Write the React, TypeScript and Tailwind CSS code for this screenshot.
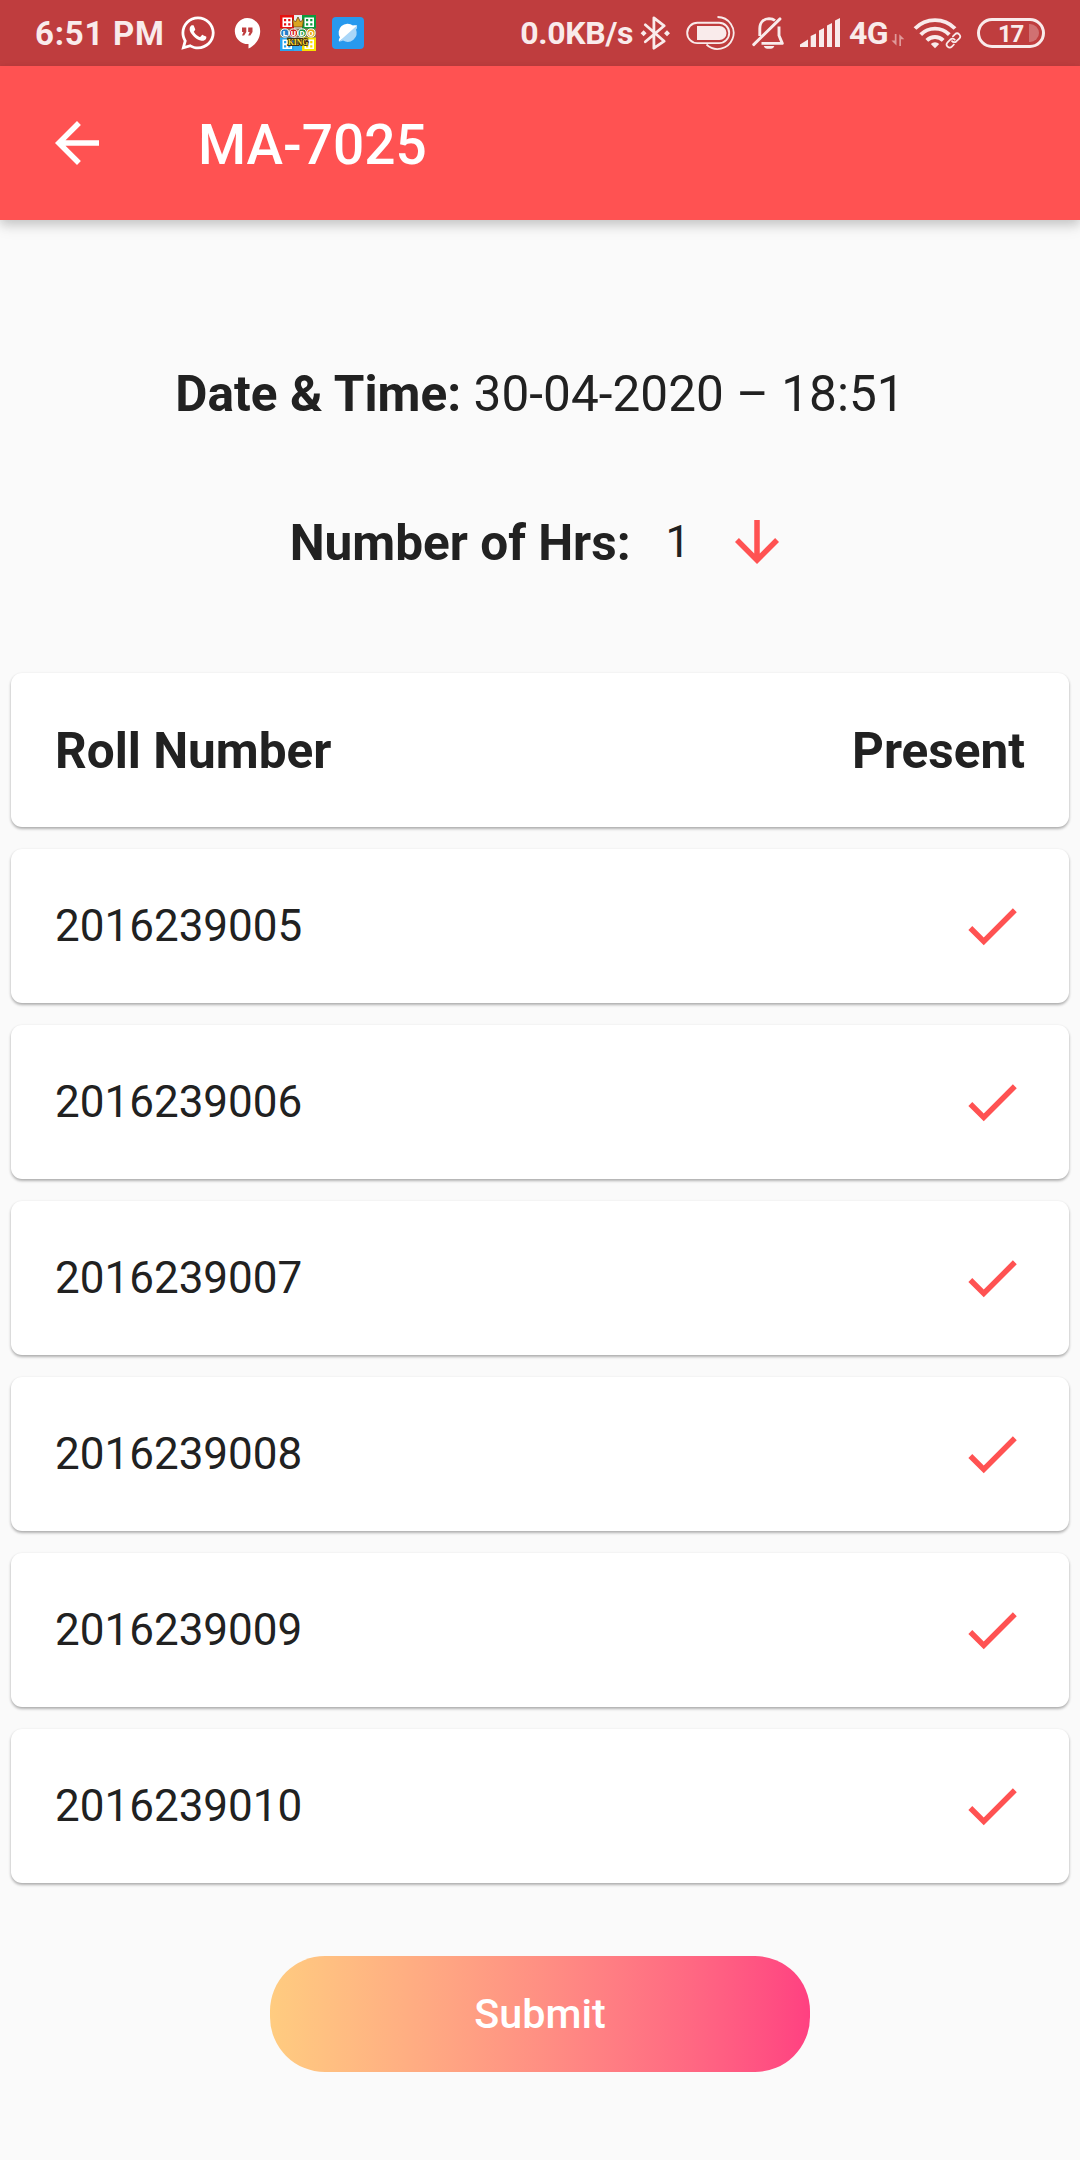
import { FaWhatsapp } from "react-icons/fa";
import { MdArrowBack, MdArrowDownward, MdCheck } from "react-icons/md";

const rollNumbers = [
  "2016239005",
  "2016239006",
  "2016239007",
  "2016239008",
  "2016239009",
  "2016239010",
];

function Hangouts() {
  return (
    <svg className="ml-[17px] h-[31px] w-[27px] shrink-0" viewBox="0 0 27 31">
      <path d="M13.2 0A13 13 0 0 1 26.2 13C26.2 21 21 27.500 14.500 30.500V26A13 13 0 1 1 13.200 0Z" fill="#fff" />
      <path d="M8 9.500h4.300v4.500l-2.200 3.600H8l1.500-3.600H8ZM14.200 9.500h4.300v4.500l-2.200 3.600h-2.100l1.500-3.600h-1.500Z" fill="#bf3d3e" />
    </svg>
  );
}

function LudoYard({ x, y, color }: { x: number; y: number; color: string }) {
  return (
    <g transform={`translate(${x} ${y})`}>
      <rect width="14" height="14" fill={color} />
      <rect x="2.500" y="2.500" width="9.500" height="9.500" fill="#fff" />
      <path d="M4 4h2.200v2.200H4zM8.200 4h2.200v2.200H8.200zM4 8.200h2.200v2.200H4zM8.200 8.200h2.200v2.200H8.200z" fill={color} />
    </g>
  );
}

function LudoKing() {
  return (
    <svg className="ml-[19px] h-[36px] w-[36px] shrink-0" viewBox="0 0 36 36">
      <rect width="36" height="36" fill="#e9eef0" />
      <LudoYard x={0} y={0} color="#e8100f" />
      <LudoYard x={22} y={0} color="#0b9c3d" />
      <LudoYard x={0} y={22} color="#2aa3ee" />
      <LudoYard x={22} y={22} color="#f8e000" />
      <path d="M14 31h8v5h-8z" fill="#38aaf0" />
      <path d="M12.500 4l3 3 2.500-5 2.500 5 3-3-1 8h-9z" fill="#d9a520" stroke="#6b4312" strokeWidth="0.800" />
      <rect y="13.500" width="36" height="9" fill="#8b7a55" />
      <g stroke="#fff" strokeWidth="1">
        <circle cx="4.800" cy="18" r="4.100" fill="#2680c9" />
        <circle cx="13.500" cy="18" r="4.100" fill="#d42020" />
        <circle cx="22.200" cy="18" r="4.100" fill="#199442" />
        <circle cx="31" cy="18" r="4.100" fill="#e5a80f" />
      </g>
      <g fontFamily="Roboto, sans-serif" fontWeight="900" fontSize="8" fill="#fff" textAnchor="middle">
        <text x="4.800" y="21">L</text>
        <text x="13.500" y="21">U</text>
        <text x="22.200" y="21">D</text>
        <text x="31" y="21">O</text>
      </g>
      <text x="18" y="30" fontFamily="Liberation Serif, serif" fontWeight="700" fontSize="7.500" textAnchor="middle" fill="#ffdf35" stroke="#3d2b10" strokeWidth="1.800" paintOrder="stroke">KING</text>
    </svg>
  );
}

function BlueBrowser() {
  return (
    <svg className="ml-[16px] h-[32px] w-[32px] shrink-0" viewBox="0 0 32 32">
      <rect width="32" height="32" rx="4" fill="#2799ee" />
      <path d="M7 24.500c-.5-1.500.2-3 1-4A9 9 0 0 1 21 8.500c1.500-.4 3-.2 4 0 .3 1.500-.4 2.800-1 4Z" fill="#fff" />
      <path d="M25 8.500c.3 1.500-.4 2.800-1 4a9 9 0 0 1-13 11c-1.500.9-3 1.200-4 1Z" fill="#a9d6f8" />
    </svg>
  );
}

function Bluetooth() {
  return (
    <svg className="ml-[8px] h-[36px] w-[30px] shrink-0" viewBox="641 15 30 36">
      <path d="M646.300 24.800 665.200 41.200 654.900 48.200V17.800L665.200 25.800 646.300 41.800" fill="none" stroke="#f9ebeb" strokeWidth="2.800" strokeLinejoin="round" strokeLinecap="round" />
      <path d="M644.600 30.300l3 3-3 3-3-3zM668 30.300l3 3-3 3-3-3z" fill="#f9ebeb" />
    </svg>
  );
}

function BatterySaver() {
  return (
    <svg className="ml-[15px] h-[36px] w-[51px] shrink-0" viewBox="686 15 51 36">
      <rect x="688.200" y="22.800" width="42" height="20.300" rx="10.100" fill="none" stroke="#f9ebeb" strokeWidth="1.900" />
      <path d="M698 26h22.500a7 7 0 0 1 0 14H698z" fill="#f9ebeb" />
      <path d="M718.500 17A16 16 0 1 1 707.500 44.500" fill="none" stroke="#f9ebeb" strokeWidth="1.800" />
    </svg>
  );
}

function MutedBell() {
  return (
    <svg className="ml-[15px] h-[34px] w-[34px] shrink-0" viewBox="751 16 34 34">
      <g fill="none" stroke="#f9ebeb" strokeWidth="2.900">
        <path d="M759.800 36V28.500C759.800 22.500 763.500 18.800 769 18.600 771.500 18.600 773.500 19.200 775 20.500" />
        <path d="M779 26.500V35.500L782.300 43.400H761.500" strokeLinejoin="round" />
        <path d="M753.700 44.600 780 18.900" strokeLinecap="round" />
      </g>
      <path d="M763.800 46h10.500a5.300 3.300 0 0 1-10.500 0z" fill="#f9ebeb" />
    </svg>
  );
}

function Signal() {
  return (
    <svg className="ml-[15px] h-[30px] w-[41px] shrink-0" viewBox="800 18 41 30">
      <path
        d="M800 47V44.500L808 39.500V47zM810.700 47V36L816 33.500V47zM819 47V30.500L824 28V47zM827 47V25.500L832 23V47zM835 47V20.500L840 18V47z"
        fill="#f9ebeb"
      />
    </svg>
  );
}

function DataArrows() {
  return (
    <svg className="mt-[14px] ml-[4px] h-[14px] w-[14px] shrink-0" viewBox="891 33 14 14">
      <path d="M896.500 34v11.500l-5-5h3.300V34zM899.300 46V34.300l5 5H901V46z" fill="#df9a9a" />
    </svg>
  );
}

function LinkedWifi() {
  return (
    <svg className="ml-[8px] h-[32px] w-[49px] shrink-0" viewBox="913 17 49 32">
      <g fill="none" stroke="#f9ebeb" strokeWidth="3.900">
        <path d="M915 28.500a28 28 0 0 1 40 0" />
        <path d="M920.700 34.600a20 20 0 0 1 28.600 0" />
        <path d="M926.800 40.400a11.500 11.500 0 0 1 16.400 0" />
      </g>
      <path d="M930.800 44a6 6 0 0 1 8.400 0l-4.200 4.300z" fill="#f9ebeb" />
      <g transform="translate(945 32) scale(0.700)" fill="none" strokeLinecap="round">
        <g stroke="#bf3d3e" strokeWidth="6">
          <path d="M10 13a5 5 0 0 0 7.540.54l3-3a5 5 0 0 0-7.070-7.070l-1.720 1.710" />
          <path d="M14 11a5 5 0 0 0-7.540-.54l-3 3a5 5 0 0 0 7.070 7.070l1.710-1.710" />
        </g>
        <g stroke="#f9ebeb" strokeWidth="2.500">
          <path d="M10 13a4.300 4.300 0 0 0 6.100.54l4.200-4.200a4.300 4.300 0 0 0-6.100-6.100l-2.900 2.900" />
          <path d="M14 11a4.300 4.300 0 0 0-6.100-.54l-4.200 4.200a4.300 4.300 0 0 0 6.100 6.100l2.900-2.900" />
        </g>
      </g>
    </svg>
  );
}

function Battery() {
  return (
    <div className="relative ml-[15px] flex h-[30px] w-[68px] shrink-0 items-center justify-center rounded-full border-[3px] border-[#f9ebeb] pt-[2px] pr-[1px] text-[24px] leading-none font-bold tracking-[-1.200px]">
      <span>17</span>
      <span className="absolute top-[3px] right-[3px] h-[18px] w-[10px] rounded-r-full bg-[#d07172]" />
    </div>
  );
}

function StatusBar() {
  return (
    <div className="flex h-[66px] shrink-0 items-center bg-[#bf3d3e] text-[33px] leading-none font-bold text-[#f9ebeb]">
      <span className="ml-[35px] w-[130px] pt-px tracking-[0.750px] whitespace-nowrap">6:51 PM</span>
      <FaWhatsapp className="ml-[14px] size-[38px] shrink-0 text-white" />
      <Hangouts />
      <LudoKing />
      <BlueBrowser />
      <span className="mr-[-1px] ml-auto text-[32px] tracking-[-0.350px] whitespace-nowrap">0.0KB/s</span>
      <Bluetooth />
      <BatterySaver />
      <MutedBell />
      <Signal />
      <span className="ml-[8px] w-[38px] text-[32px] tracking-[-0.500px] whitespace-nowrap">4G</span>
      <DataArrows />
      <LinkedWifi />
      <Battery />
      <div className="w-[35px] shrink-0" />
    </div>
  );
}

export default function App() {
  return (
    <div className="flex h-[2160px] w-[1080px] flex-col overflow-hidden bg-[#fafafa] font-[Roboto,sans-serif] text-[#212121]">
      <StatusBar />
      <header className="flex h-[154px] shrink-0 items-center bg-[#ff5252] pl-[44px] text-white shadow-[0_4px_10px_rgba(0,0,0,0.16),0_8px_14px_rgba(0,0,0,0.07)]">
        <MdArrowBack className="size-[66px]" />
        <h1 className="ml-[88px] pt-[4px] text-[55px] leading-[64px] font-medium">MA-7025</h1>
      </header>

      <section className="flex h-[453px] shrink-0 flex-col items-center">
        <p className="mt-[145px] text-[49.5px] leading-[58px] tracking-[0.050px] whitespace-nowrap">
          <b>Date &amp; Time:</b> 30-04-2020 – 18:51
        </p>
        <div className="mt-[86px] flex h-[66px] items-center">
          <b className="pt-[2px] text-[49.5px] leading-[58px]">Number of Hrs:</b>
          <span className="ml-[35px] text-[44px] leading-[52px]">1</span>
          <MdArrowDownward className="ml-[34px] size-[66px] text-[#ff5252]" />
        </div>
      </section>

      <ul className="flex shrink-0 flex-col gap-[22px] px-[11px]">
        <li className="flex h-[154px] items-center justify-between rounded-[11px] bg-white px-[44px] pt-[2px] text-[49.5px] leading-[58px] font-bold shadow-[0_2px_3px_rgba(0,0,0,0.24),0_1px_3px_rgba(0,0,0,0.12)]">
          <span>Roll Number</span>
          <span>Present</span>
        </li>
        {rollNumbers.map((roll) => (
          <li
            key={roll}
            className="flex h-[154px] items-center justify-between rounded-[11px] bg-white px-[44px] text-[44px] leading-[52px] shadow-[0_2px_3px_rgba(0,0,0,0.24),0_1px_3px_rgba(0,0,0,0.12)]"
          >
            <span>{roll}</span>
            <MdCheck className="size-[66px] text-[#ff5252]" />
          </li>
        ))}
      </ul>

      <button className="mt-[73px] h-[116px] w-[540px] shrink-0 self-center rounded-[55px] bg-linear-to-r from-[#ffcc80] to-[#ff4081] text-[41.25px] leading-[48px] font-medium text-white">
        Submit
      </button>
    </div>
  );
}
